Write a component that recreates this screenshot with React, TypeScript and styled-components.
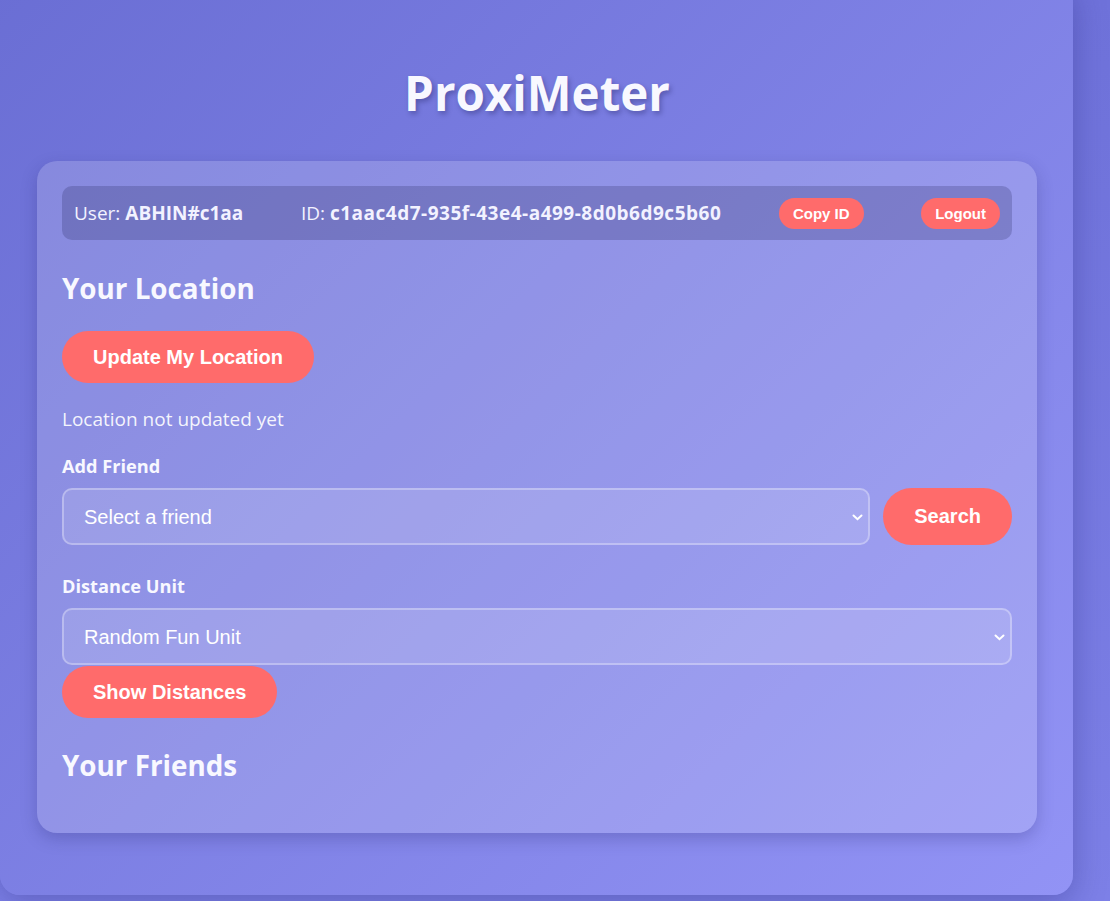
import styled, { createGlobalStyle } from "styled-components";

const GlobalStyle = createGlobalStyle`
  html, body {
    margin: 0;
    padding: 0;
  }
  body {
    min-height: 901px;
    overflow: hidden;
    background: linear-gradient(180deg, #6f72da 0%, #7d80e7 100%);
    font-family: "Open Sans", "Noto Sans", sans-serif;
    color: #fff;
  }
`;

const Container = styled.div`
  width: 1073px;
  box-sizing: border-box;
  margin-top: -20px;
  padding: 0 36px 62px 37px;
  border-radius: 20px;
  background: linear-gradient(135deg, #6a6ed4 0%, #9293f5 100%);
  box-shadow: 0 8px 32px rgba(40, 40, 120, 0.35);
`;

const Title = styled.h1`
  margin: 0;
  padding: 83px 0 38px;
  font-size: 47.5px;
  line-height: 60px;
  font-weight: 700;
  text-align: center;
  color: #f8f8ff;
  text-shadow: 2px 3px 5px rgba(30, 30, 90, 0.35);
`;

const Card = styled.div`
  padding: 25px 25px 50px;
  border-radius: 20px;
  background: rgba(255, 255, 255, 0.17);
  box-shadow: 0 6px 16px rgba(40, 40, 110, 0.25);
`;

const InfoBar = styled.div`
  height: 54px;
  padding: 0 12px;
  border-radius: 10px;
  background: rgba(20, 20, 70, 0.2);
  display: flex;
  align-items: center;
  justify-content: space-between;
  font-size: 19px;
  color: #f2f2ff;

  b {
    font-weight: 700;
  }
`;

const IdValue = styled.b`
  letter-spacing: 0.5px;
`;

const Button = styled.button<{ $small?: boolean }>`
  border: none;
  border-radius: 30px;
  background: #ff6b6b;
  color: #fff;
  font-family: "Liberation Sans", Arial, sans-serif;
  font-weight: 700;
  font-size: ${(p) => (p.$small ? "15px" : "20px")};
  line-height: ${(p) => (p.$small ? "17px" : "23px")};
  padding: ${(p) => (p.$small ? "7px 14px" : "14.5px 31px")};
  cursor: pointer;
`;

const Heading = styled.h2<{ $top: number }>`
  margin: ${(p) => p.$top}px 0 0;
  font-size: 27.8px;
  line-height: 36px;
  font-weight: 700;
  color: #f8f8ff;
`;

const Status = styled.p`
  margin: 24px 0 0;
  font-size: 19px;
  line-height: 24px;
  color: rgba(255, 255, 255, 0.92);
`;

const Label = styled.label<{ $top: number }>`
  display: block;
  margin: ${(p) => p.$top}px 0 11px;
  font-size: 18.2px;
  line-height: 22px;
  font-weight: 700;
  color: #f8f8ff;
`;

const Row = styled.div`
  display: flex;
  gap: 13px;
  align-items: stretch;
`;

const SelectWrap = styled.div`
  position: relative;
  flex: 1;
`;

const Select = styled.select`
  width: 100%;
  height: 57px;
  box-sizing: border-box;
  appearance: none;
  padding: 0 40px 0 20px;
  border: 2px solid rgba(255, 255, 255, 0.3);
  border-radius: 10px;
  background: rgba(255, 255, 255, 0.12);
  color: #fff;
  font-family: "Liberation Sans", Arial, sans-serif;
  font-size: 20px;
  outline: none;
`;

const Chevron = styled.svg`
  position: absolute;
  right: 7px;
  top: 50%;
  margin-top: -3px;
  pointer-events: none;
`;

const Field = ({ value }: { value: string }) => (
  <SelectWrap>
    <Select defaultValue={value}>
      <option>{value}</option>
    </Select>
    <Chevron width="11" height="7" viewBox="0 0 11 7">
      <path d="M1.5 1.5 L5.5 5.2 L9.5 1.5" fill="none" stroke="#fff" strokeWidth="2" strokeLinecap="round" />
    </Chevron>
  </SelectWrap>
);

const ButtonLine = styled.div<{ $top: number }>`
  margin-top: ${(p) => p.$top}px;
`;

const Friends = styled.div``;

export default function App() {
  return (
    <>
      <GlobalStyle />
      <Container>
        <Title>ProxiMeter</Title>
        <Card>
          <InfoBar>
            <span>
              User: <b>ABHIN#c1aa</b>
            </span>
            <span>
              ID: <IdValue>c1aac4d7-935f-43e4-a499-8d0b6d9c5b60</IdValue>
            </span>
            <Button $small>Copy ID</Button>
            <Button $small>Logout</Button>
          </InfoBar>

          <Heading $top={30}>Your Location</Heading>
          <ButtonLine $top={25}>
            <Button>Update My Location</Button>
          </ButtonLine>
          <Status>Location not updated yet</Status>

          <Label $top={24}>Add Friend</Label>
          <Row>
            <Field value="Select a friend" />
            <Button>Search</Button>
          </Row>

          <Label $top={30}>Distance Unit</Label>
          <Field value="Random Fun Unit" />
          <ButtonLine $top={1}>
            <Button>Show Distances</Button>
          </ButtonLine>

          <Heading $top={29}>Your Friends</Heading>
          <Friends />
        </Card>
      </Container>
    </>
  );
}
